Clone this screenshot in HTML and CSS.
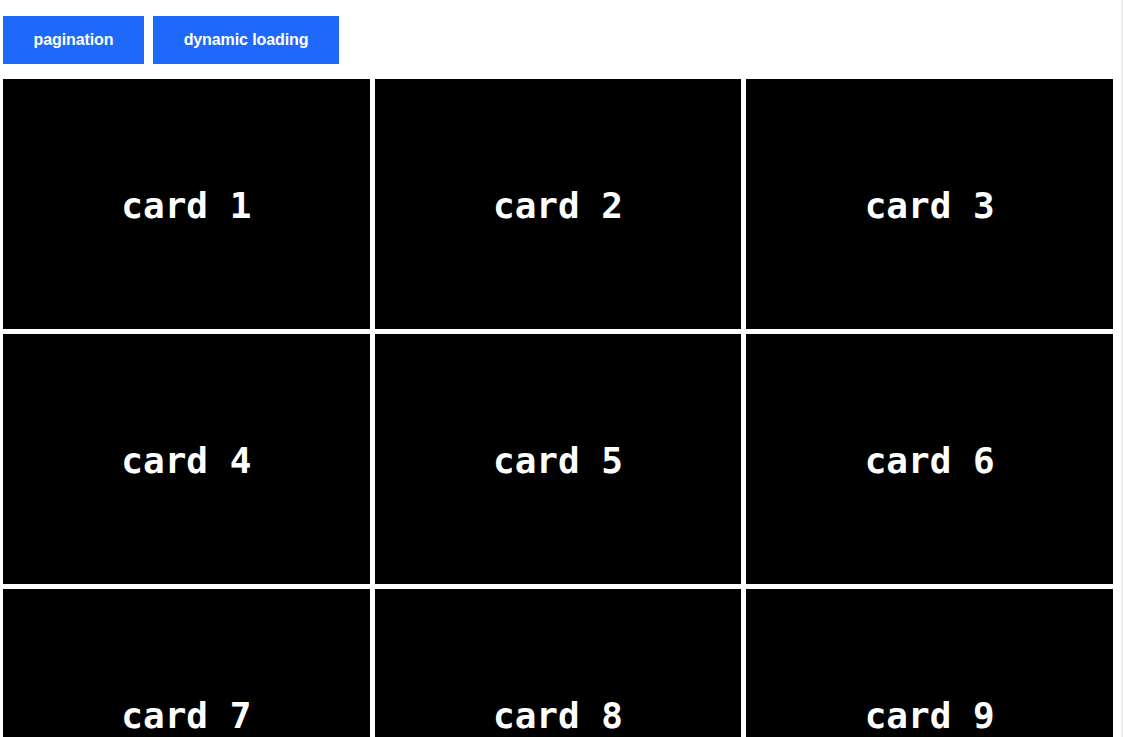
FILE: index.html
```html
<!DOCTYPE html>
<html lang="en">
<head>
<meta charset="utf-8">
<title>Cards</title>
<link rel="stylesheet" href="styles.css">
</head>
<body>
<div class="page">
  <div class="toolbar">
    <button class="btn btn-pagination">pagination</button>
    <button class="btn btn-dynamic">dynamic loading</button>
  </div>
  <div class="grid">
    <div class="card">card 1</div>
    <div class="card">card 2</div>
    <div class="card">card 3</div>
    <div class="card">card 4</div>
    <div class="card">card 5</div>
    <div class="card">card 6</div>
    <div class="card">card 7</div>
    <div class="card">card 8</div>
    <div class="card">card 9</div>
  </div>
</div>
</body>
</html>
```

FILE: styles.css
```css
html {
  overflow: hidden;
  background: #fff;
}
body {
  margin: 0;
  width: 1121px;
  border-right: 2px solid #ececec;
  min-height: 737px;
  font-family: "Liberation Sans", Arial, sans-serif;
}
.page {
  padding: 16px 0 0 3px;
}
.toolbar {
  display: flex;
  gap: 9px;
  height: 48px;
  margin-bottom: 15px;
}
.btn {
  height: 48px;
  padding: 0 0 1px;
  border: none;
  background: #1f69fa;
  color: #fff;
  font-family: "Liberation Sans", Arial, sans-serif;
  font-weight: bold;
  font-size: 16px;
  letter-spacing: -0.1px;
  cursor: pointer;
}
.btn-pagination {
  width: 141px;
}
.btn-dynamic {
  width: 186px;
}
.grid {
  width: 1110px;
  display: grid;
  grid-template-columns: repeat(3, 1fr);
  gap: 5px;
}
.card {
  height: 250px;
  background: #000;
  color: #fff;
  display: flex;
  align-items: center;
  justify-content: center;
  padding-top: 3px;
  box-sizing: border-box;
  font-family: "DejaVu Sans Mono", monospace;
  font-weight: bold;
  font-size: 36px;
}
```
